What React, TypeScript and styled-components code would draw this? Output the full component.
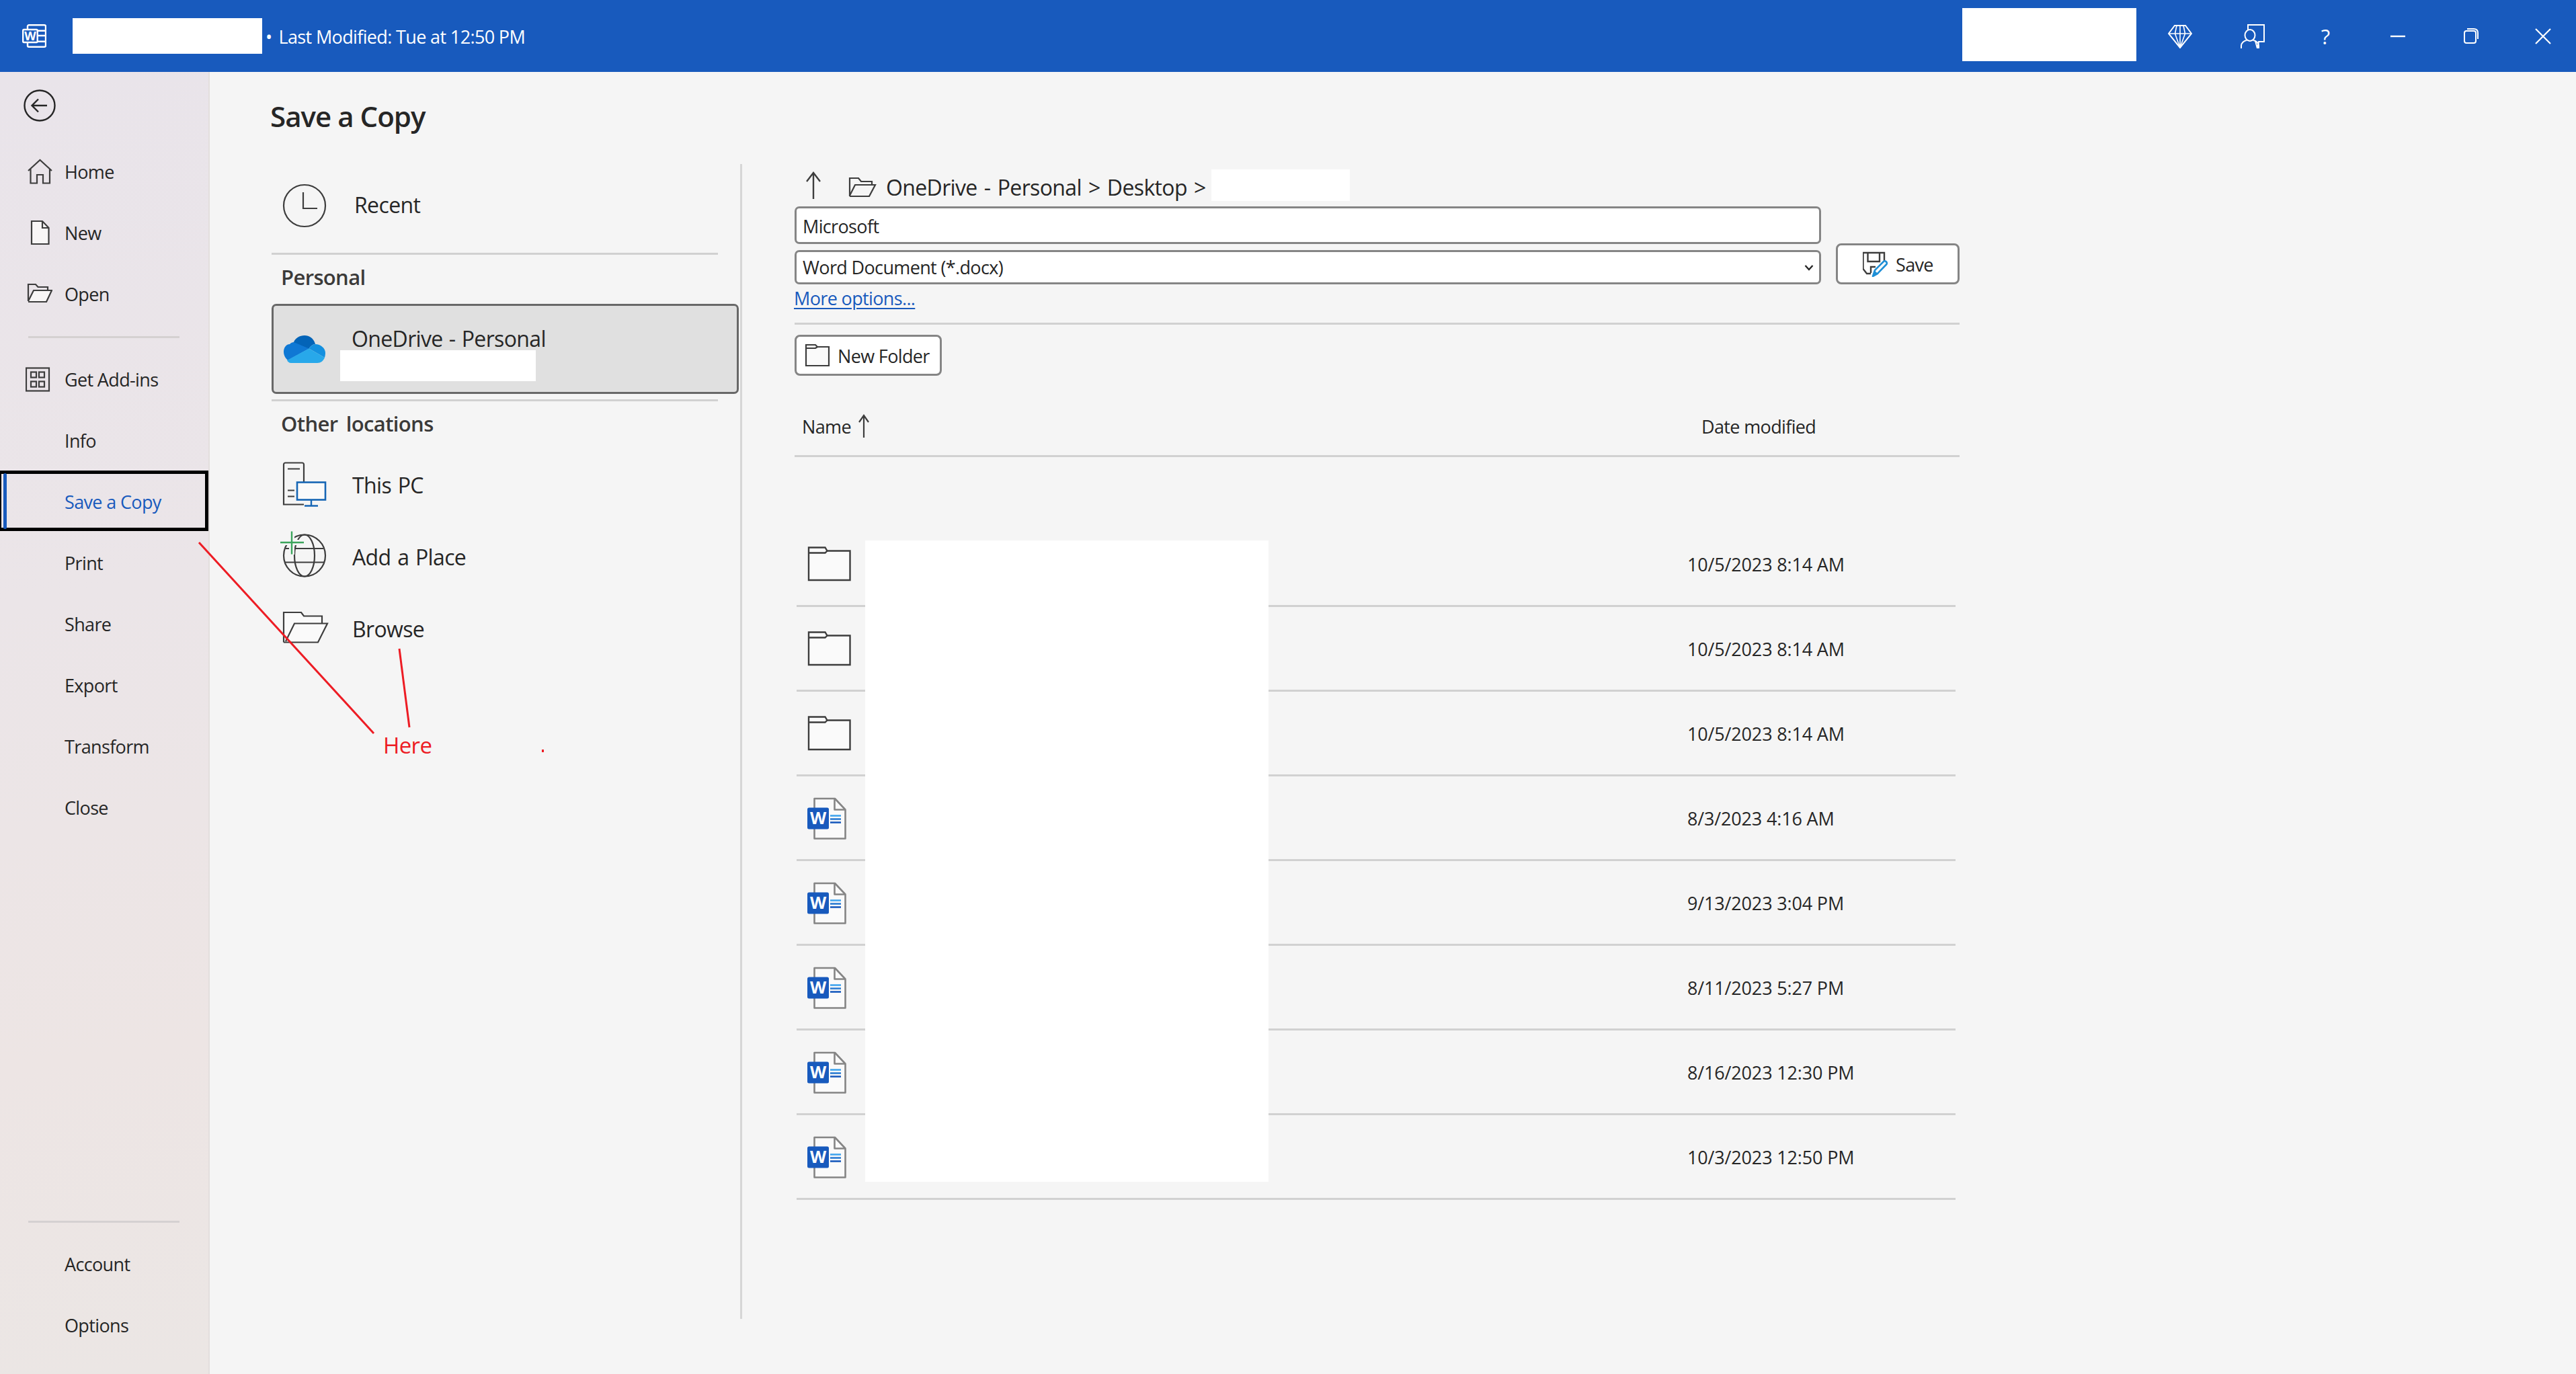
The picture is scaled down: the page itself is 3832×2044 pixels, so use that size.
import React from 'react';
import styled, { createGlobalStyle } from 'styled-components';

const FONT = `"Open Sans", "Noto Sans", "Liberation Sans", sans-serif`;
const INK = '#262626';
const STROKE = '#3d3d3d';
const RULE = '#d1d1d1';
const BLUE = '#185abd';

const Global = createGlobalStyle`
  html, body { margin: 0; padding: 0; background: #f5f5f5; }
  *, *::before, *::after { box-sizing: border-box; }
  body { font-family: ${FONT}; color: ${INK}; letter-spacing: -0.04em; }
`;

const Page = styled.div`
  position: relative;
  width: 3832px;
  height: 2044px;
  overflow: hidden;
  display: flex;
  flex-direction: column;
  background: #f5f5f5;
`;

/* ---------- title bar ---------- */
const TitleBar = styled.header`
  flex: none;
  height: 107px;
  background: ${BLUE};
  display: flex;
  align-items: center;
  padding: 0 31px 0 33px;
  color: #fff;
`;
const TitleLogo = styled.svg`
  width: 36px;
  height: 35px;
  flex: none;
  margin-right: 39px;
`;
const Redaction = styled.div<{ $w: number; $h: number; $up?: number }>`
  flex: none;
  width: ${p => p.$w}px;
  height: ${p => p.$h}px;
  margin-top: ${p => -(p.$up ?? 0)}px;
  background: #fff;
`;
const TitleText = styled.span`
  margin-left: 5px;
  font-size: 27px;
  white-space: pre;
  margin-top: 2px;
  display: flex;
  gap: 10px;
`;
const TitleSpacer = styled.div`
  flex: 1;
`;
const TitleTools = styled.div`
  margin-left: 47px;
  display: flex;
  gap: 72px;
  align-items: center;
`;
const ToolIcon = styled.svg`
  width: 36px;
  height: 36px;
  flex: none;
  display: block;
`;
const HelpMark = styled.span`
  width: 36px;
  text-align: center;
  font-size: 31px;
  font-weight: 400;
  line-height: 36px;
  color: #fff;
`;

/* ---------- body ---------- */
const Body = styled.div`
  flex: 1;
  min-height: 0;
  display: flex;
`;
const Sidebar = styled.nav`
  flex: none;
  width: 312px;
  display: flex;
  flex-direction: column;
  padding-bottom: 25px;
  background: linear-gradient(172deg, #e9e4ea 0%, #ebe5e8 40%, #ede5e4 75%, #ebe6e4 100%);
  border-right: 2px solid #e3dedd;
`;
const BackRow = styled.div`
  height: 105px;
  flex: none;
  padding-left: 35px;
  display: flex;
  align-items: center;
`;
const BackIcon = styled.svg`
  width: 48px;
  height: 48px;
  margin-top: -5px;
`;
const NavRow = styled.div<{ $active?: boolean; $hasIcon?: boolean }>`
  position: relative;
  flex: none;
  height: 91px;
  display: flex;
  align-items: center;
  padding-left: ${p => (p.$hasIcon ? 38 : 96)}px;
  padding-bottom: 4px;
  font-size: 27px;
  color: ${p => (p.$active ? BLUE : INK)};
  ${p =>
    p.$active
      ? `
    &::before {
      content: '';
      position: absolute;
      left: 0; top: -3px; width: 310px; height: 90px;
      border: 5px solid #000;
      border-left-width: 2px;
    }
    &::after {
      content: '';
      position: absolute;
      left: 5px; top: 1px; width: 5px; height: 83px;
      border-radius: 3px;
      background: ${BLUE};
    }
  `
      : ''}
`;
const NavIconSlot = styled.span`
  flex: none;
  width: 40px;
  height: 40px;
  margin-right: 18px;
  display: flex;
  align-items: center;
  justify-content: center;
`;
const NavIcon = styled.svg`
  width: 40px;
  height: 40px;
  display: block;
`;
const NavRule = styled.div<{ $top: number; $bottom: number }>`
  flex: none;
  height: 3px;
  width: 225px;
  margin: ${p => p.$top}px 0 ${p => p.$bottom}px 42px;
  background: #d5d1d1;
`;
const NavSpacer = styled.div`
  flex: 1;
`;

const Main = styled.main`
  flex: 1;
  min-width: 0;
  display: flex;
  flex-direction: column;
  padding-left: 90px;
  padding-bottom: 82px;
  background: #f5f5f5;
`;
const Heading = styled.h1`
  flex: none;
  height: 137px;
  margin: 0;
  padding-top: 36px;
  font-size: 42px;
  line-height: 60px;
  font-weight: 600;
  letter-spacing: -0.023em;
  color: #262626;
`;
const Columns = styled.div`
  flex: 1;
  min-height: 0;
  display: flex;
`;

/* ---------- places column ---------- */
const Places = styled.section`
  flex: none;
  width: 702px;
  padding-left: 2px;
  border-right: 3px solid #d6d6d6;
`;
const PlaceRow = styled.div<{ $h: number; $gap: number }>`
  height: ${p => p.$h}px;
  display: flex;
  align-items: center;
  padding-left: 16px;
  font-size: 32px;
  word-spacing: 2px;
  & > svg {
    flex: none;
    width: 70px;
    height: 70px;
    margin-right: ${p => p.$gap}px;
    display: block;
    overflow: visible;
  }
`;
const RecentLabel = styled.span`
  margin-top: -4px;
`;
const PlacesRule = styled.div`
  height: 3px;
  width: 664px;
  margin-top: 8px;
  background: ${RULE};
`;
const SectionLabel = styled.div<{ $h: number; $pb: number }>`
  height: ${p => p.$h}px;
  padding: 0 0 ${p => p.$pb}px 14px;
  display: flex;
  align-items: center;
  font-size: 31px;
  font-weight: 600;
  word-spacing: 5px;
  color: #3b3a39;
`;
const DriveBox = styled.div`
  height: 134px;
  width: 695px;
  padding-left: 15px;
  background: #e0e0e0;
  border: 3px solid #686868;
  border-radius: 7px;
  display: flex;
  align-items: center;
  position: relative;
`;
const DriveIcon = styled.svg`
  flex: none;
  width: 62px;
  height: 41px;
  margin-right: 39px;
`;
const DriveLabel = styled.div`
  font-size: 32px;
  word-spacing: 1.5px;
  margin-top: -31px;
`;
const DriveRedaction = styled.div`
  position: absolute;
  left: 99px;
  top: 66px;
  width: 291px;
  height: 46px;
  background: #fff;
`;

/* ---------- save form column ---------- */
const SaveArea = styled.section`
  flex: 1;
  min-width: 0;
  padding-left: 78px;
  width: 100%;
`;
const SaveInner = styled.div`
  width: 1733px;
`;
const Crumbs = styled.div`
  height: 63px;
  display: flex;
  align-items: center;
  font-size: 32px;
`;
const UpIcon = styled.svg`
  width: 24px;
  height: 42px;
  margin-left: 16px;
  margin-right: 40px;
  flex: none;
`;
const CrumbFolder = styled.svg`
  width: 42px;
  height: 30px;
  margin-right: 14px;
  margin-top: 4px;
  flex: none;
`;
const CrumbText = styled.span`
  white-space: pre;
  word-spacing: 2.5px;
  margin-right: 8px;
  margin-top: 5px;
`;
const CrumbRedaction = styled.div`
  width: 206px;
  height: 47px;
  background: #fff;
  margin-top: -1px;
`;
const FormRow = styled.div`
  display: flex;
  align-items: flex-end;
  justify-content: space-between;
`;
const FieldStack = styled.div`
  width: 1527px;
  display: flex;
  flex-direction: column;
  gap: 9px;
`;
const Field = styled.div<{ $h: number; $pt: number }>`
  height: ${p => p.$h}px;
  padding: ${p => p.$pt}px 8px 0 9px;
  background: #fff;
  border: 3px solid #858585;
  border-radius: 7px;
  display: flex;
  align-items: center;
  justify-content: space-between;
  font-size: 27px;
`;
const Chevron = styled.svg`
  width: 14px;
  height: 10px;
`;
const OutlineButton = styled.div<{ $w: number; $h: number; $pad: number }>`
  width: ${p => p.$w}px;
  height: ${p => p.$h}px;
  padding: 1px 0 0 ${p => p.$pad}px;
  background: #fff;
  border: 3px solid #858585;
  border-radius: 8px;
  display: flex;
  align-items: center;
  font-size: 27px;
  flex: none;
`;
const ButtonIcon = styled.svg`
  width: 38px;
  height: 38px;
  margin-right: 11px;
  flex: none;
`;
const MoreOptions = styled.a`
  display: block;
  height: 57px;
  margin-left: -1px;
  line-height: 42px;
  font-size: 27px;
  color: ${BLUE};
  text-decoration: underline;
  text-underline-offset: 4px;
`;
const FormRule = styled.div`
  height: 3px;
  background: ${RULE};
  margin-bottom: 15px;
`;
const HeaderRow = styled.div`
  height: 121px;
  padding-top: 50px;
  display: grid;
  grid-template-columns: 1349px 1fr;
  align-items: center;
  padding-bottom: 17px;
  font-size: 27px;
  border-bottom: 3px solid ${RULE};
`;
const HeaderName = styled.div`
  padding-left: 11px;
  display: flex;
  align-items: center;
  gap: 10px;
`;
const SortArrow = styled.svg`
  width: 18px;
  height: 36px;
  margin-top: -2px;
`;
const FileList = styled.div`
  position: relative;
  padding-top: 97px;
`;
const FileRow = styled.div`
  height: 126px;
  margin: 0 6px 0 3px;
  padding-left: 17px;
  display: grid;
  grid-template-columns: 1308px 1fr;
  align-items: center;
  font-size: 27px;
  border-bottom: 3px solid ${RULE};
`;
const FileDate = styled.div`
  padding-top: 1px;
  letter-spacing: -0.006em;
`;
const FileIcon = styled.svg`
  width: 64px;
  height: 64px;
  display: block;
  overflow: visible;
`;
const NamesRedaction = styled.div`
  position: absolute;
  left: 105px;
  top: 124px;
  width: 600px;
  height: 954px;
  background: #fff;
`;

/* ---------- annotations ---------- */
const Annotation = styled.svg`
  position: absolute;
  left: 0;
  top: 0;
  width: 3832px;
  height: 2044px;
  pointer-events: none;
`;
const HereLabel = styled.span`
  position: absolute;
  left: 570px;
  top: 1086px;
  font-size: 33px;
  line-height: 46px;
  color: #ed1c24;
`;

/* ---------- drawings ---------- */
const FolderGlyph = () => (
  <FileIcon viewBox="0 0 64 64" fill="none">
    <path d="M1 16V7.5H25.5l3 5H62.5V56H1z" fill="#fafafa" stroke={STROKE} strokeWidth="2.4" />
    <path d="M1 15.5H25.5l3-3" stroke={STROKE} strokeWidth="2.4" />
  </FileIcon>
);

const WordFileGlyph = () => (
  <FileIcon viewBox="0 0 64 64" fill="none">
    <path d="M9.5 3H40L55.5 19.5V62.5H9.5z" fill="#fafafa" stroke="#858585" strokeWidth="2.6" strokeLinejoin="round" />
    <path d="M39.5 3V19.5H55.5" stroke="#858585" strokeWidth="2.6" strokeLinejoin="round" />
    <rect x="-1" y="16.5" width="32" height="32" rx="2.5" fill={BLUE} />
    <text x="15" y="41" textAnchor="middle" fontFamily="Open Sans, sans-serif" fontWeight="700" fontSize="25" letterSpacing="0" fill="#fff">W</text>
    <path d="M33 28.5H49" stroke="#41a5ee" strokeWidth="2.6" />
    <path d="M33 33.5H49" stroke="#2b7cd3" strokeWidth="2.6" />
    <path d="M33 38.5H49" stroke={BLUE} strokeWidth="2.6" />
  </FileIcon>
);

const files = [
  { kind: 'folder', date: '10/5/2023 8:14 AM' },
  { kind: 'folder', date: '10/5/2023 8:14 AM' },
  { kind: 'folder', date: '10/5/2023 8:14 AM' },
  { kind: 'word', date: '8/3/2023 4:16 AM' },
  { kind: 'word', date: '9/13/2023 3:04 PM' },
  { kind: 'word', date: '8/11/2023 5:27 PM' },
  { kind: 'word', date: '8/16/2023 12:30 PM' },
  { kind: 'word', date: '10/3/2023 12:50 PM' },
];

const navIcon = (name: string) => {
  switch (name) {
    case 'home':
      return (
        <NavIcon viewBox="0 0 40 40" fill="none" stroke={STROKE} strokeWidth="2.2">
          <path d="M4 18 21.5 2 39 18M7.5 15.5V36.5H17V24H26V36.5H36V15.5" />
        </NavIcon>
      );
    case 'new':
      return (
        <NavIcon viewBox="0 0 40 40" fill="none" stroke={STROKE} strokeWidth="2.2">
          <path d="M9 2H25L34.5 12V36H9z" fill="#f8f6f6" />
          <path d="M25 2V12H34.5" />
        </NavIcon>
      );
    case 'open':
      return (
        <NavIcon viewBox="0 0 40 40" fill="none" stroke={STROKE} strokeWidth="2.2">
          <path d="M4 30V5H15L18.5 9H33V14" />
          <path d="M4 31H31L39 14H12L4 30" fill="#f8f6f6" />
        </NavIcon>
      );
    default:
      return (
        <NavIcon viewBox="0 0 40 40" fill="none" stroke={STROKE} strokeWidth="2.2">
          <rect x="1" y="2.5" width="34" height="34" />
          <rect x="8" y="8.5" width="8" height="8" />
          <rect x="20" y="8.5" width="8" height="8" />
          <rect x="8" y="22.5" width="8" height="8" />
          <rect x="20" y="22.5" width="8" height="8" />
        </NavIcon>
      );
  }
};

const Nav = ({ label, icon, active }: { label: string; icon?: string; active?: boolean }) => (
  <NavRow $active={active} $hasIcon={!!icon}>
    {icon ? <NavIconSlot>{navIcon(icon)}</NavIconSlot> : null}
    {label}
  </NavRow>
);

export default function App() {
  return (
    <Page>
      <Global />
      <TitleBar>
        <TitleLogo viewBox="0 0 36 35" fill="none" stroke="#fff" strokeWidth="2.4">
          <rect x="8" y="1.2" width="27" height="32.6" rx="2" />
          <path d="M22 9.7H35M22 17H35M22 25.7H35" />
          <rect x="1.2" y="8" width="21.5" height="19" rx="1.5" fill={BLUE} />
          <text x="12" y="24" textAnchor="middle" fontFamily="Open Sans, sans-serif" fontWeight="700" fontSize="18" letterSpacing="0" fill="#fff" stroke="none">W</text>
        </TitleLogo>
        <Redaction $w={282} $h={53} />
        <TitleText><span>•</span><span>Last Modified: Tue at 12:50 PM</span></TitleText>
        <TitleSpacer />
        <Redaction $w={259} $h={79} $up={4} />
        <TitleTools>
          <ToolIcon viewBox="0 0 36 36" fill="none" stroke="#fff" strokeWidth="2">
            <path d="M10 2H26L35 14 18 35 1 14z" />
            <path d="M1 14H35M13 2 10.5 14 18 35l7.5-21L23 2M18 2V35" strokeWidth="1.6" />
          </ToolIcon>
          <ToolIcon viewBox="0 0 36 36" fill="none" stroke="#fff" strokeWidth="2">
            <path d="M11 8V1H35V26H27L25 36 22 25" />
            <ellipse cx="14" cy="16.5" rx="7.5" ry="8.5" />
            <path d="M1 36V32C1 28 5 24.5 9 24M27 36V32C27 28 23 24.5 19 24" />
          </ToolIcon>
          <HelpMark>?</HelpMark>
          <ToolIcon viewBox="0 0 36 36" fill="none" stroke="#fff" strokeWidth="2.4">
            <path d="M7 18H29" />
          </ToolIcon>
          <ToolIcon viewBox="0 0 36 36" fill="none" stroke="#fff" strokeWidth="2">
            <rect x="9" y="10" width="17" height="18" rx="3" />
            <path d="M13 7H23C27 7 29 9 29 13V22" />
          </ToolIcon>
          <ToolIcon viewBox="0 0 36 36" fill="none" stroke="#fff" strokeWidth="2.2">
            <path d="M7 7 29 29M29 7 7 29" />
          </ToolIcon>
        </TitleTools>
      </TitleBar>

      <Body>
        <Sidebar>
          <BackRow>
            <BackIcon viewBox="0 0 48 48" fill="none" stroke="#262626" strokeWidth="2.4">
              <circle cx="24" cy="24" r="22.5" />
              <path d="M35 24H13M22 14.5 12.5 24 22 33.5" />
            </BackIcon>
          </BackRow>
          <Nav label="Home" icon="home" />
          <Nav label="New" icon="new" />
          <Nav label="Open" icon="open" />
          <NavRule $top={15} $bottom={18} />
          <Nav label="Get Add-ins" icon="addins" />
          <Nav label="Info" />
          <Nav label="Save a Copy" active />
          <Nav label="Print" />
          <Nav label="Share" />
          <Nav label="Export" />
          <Nav label="Transform" />
          <Nav label="Close" />
          <NavSpacer />
          <NavRule $top={0} $bottom={18} />
          <Nav label="Account" />
          <Nav label="Options" />
        </Sidebar>

        <Main>
          <Heading>Save a Copy</Heading>
          <Columns>
            <Places>
              <PlaceRow $h={124} $gap={37}>
                <svg viewBox="0 0 70 70" fill="none" stroke={STROKE} strokeWidth="2.2">
                  <circle cx="33" cy="35" r="31" />
                  <path d="M31 15V39H52" />
                </svg>
                <RecentLabel>Recent</RecentLabel>
              </PlaceRow>
              <PlacesRule />
              <SectionLabel $h={73} $pb={7}>Personal</SectionLabel>
              <DriveBox>
                <DriveIcon viewBox="0 0 62 41">
                  <path d="M38 19.5 24 11C19 9 12 9 9 13 3 13 0 19 0 24 0 30 3 34 6 37z" fill="#0f78d4" />
                  <path d="M15 10C17 4 24 0 31 0 39 0 45 5 47 13 43 13 40 16 37.5 19.5z" fill="#0364b8" />
                  <path d="M47 13C55 13 62 19 62 26 62 28 61.5 31 61 33L37.5 19.5C40 16 43 13 47 13z" fill="#1490df" />
                  <path d="M37.5 19.5 61 33C59 38 55 41 50 41H11C8 41 6 39 5 37z" fill="#28a8ea" />
                </DriveIcon>
                <DriveLabel>OneDrive - Personal</DriveLabel>
                <DriveRedaction />
              </DriveBox>
              <PlacesRule />
              <SectionLabel $h={71} $pb={6}>Other locations</SectionLabel>
              <PlaceRow $h={107} $gap={34}>
                <svg viewBox="0 0 70 70" fill="none" stroke={STROKE} strokeWidth="2.2">
                  <path d="M32 30V4C32 2.5 31 1.5 29.500 1.500H4.500C3 1.500 2 2.500 2 4V63.500H32" />
                  <path d="M8 10.500H26M8 42.500H18M8 51.500H18" />
                  <rect x="22" y="30.500" width="42" height="26" fill="#fafafa" stroke="#1666b5" strokeWidth="2.6" />
                  <path d="M43 57V65.500M33 65.500H53" stroke="#1666b5" strokeWidth="2.4" />
                </svg>
                This PC
              </PlaceRow>
              <PlaceRow $h={107} $gap={34}>
                <svg viewBox="0 0 70 70" fill="none" stroke={STROKE} strokeWidth="2.2">
                  <circle cx="33" cy="32.500" r="31" />
                  <ellipse cx="33" cy="32.500" rx="15" ry="31" />
                  <path d="M5 22H61M3 42.500H63" />
                  <path d="M-3 13H32M14 -4V31" stroke="#f5f5f5" strokeWidth="8" />
                  <path d="M-3 13H32M14 -3.500V30.500" stroke="#3ba55c" strokeWidth="2.4" />
                </svg>
                Add a Place
              </PlaceRow>
              <PlaceRow $h={107} $gap={34}>
                <svg viewBox="0 0 70 70" fill="none" stroke={STROKE} strokeWidth="2.2">
                  <path d="M2 54.500V10H28L32 15.500H59V26.500" fill="#fafafa" />
                  <path d="M2 54.500H53L67 26.500H18L5 53" fill="#fafafa" />
                </svg>
                Browse
              </PlaceRow>
            </Places>

            <SaveArea>
              <SaveInner>
                <Crumbs>
                  <UpIcon viewBox="0 0 24 42" fill="none" stroke={STROKE} strokeWidth="2.4">
                    <path d="M12 41V2M2 15 12 2 22 15" />
                  </UpIcon>
                  <CrumbFolder viewBox="0 0 42 30" fill="none" stroke={STROKE} strokeWidth="2.2">
                    <path d="M2 29V2H15L19 7H35V12" />
                    <path d="M2 29H31L40 12H10L2 28" />
                  </CrumbFolder>
                  <CrumbText>OneDrive - Personal &gt; Desktop &gt;</CrumbText>
                  <CrumbRedaction />
                </Crumbs>
                <FormRow>
                  <FieldStack>
                    <Field $h={56} $pt={3}>Microsoft</Field>
                    <Field $h={51} $pt={0}>
                      Word Document (*.docx)
                      <Chevron viewBox="0 0 14 10" fill="none" stroke={INK} strokeWidth="2.4">
                        <path d="M1.5 2 7 8 12.5 2" />
                      </Chevron>
                    </Field>
                  </FieldStack>
                  <OutlineButton $w={184} $h={61} $pad={37}>
                    <ButtonIcon viewBox="0 0 38 38" fill="none">
                      <path d="M32 17V2H.5V26L6 33H12M7.500 2V15H25V2M12 32V23H19" stroke={STROKE} strokeWidth="2.4" />
                      <path d="M15 37 18 28 31 15C33 13 37 16 35.500 19L22 33z" fill="#fafafa" stroke="#1f8fd6" strokeWidth="2.600" strokeLinejoin="round" />
                      <path d="M15 37.500 18 29 22.500 33z" fill="#1f8fd6" />
                    </ButtonIcon>
                    Save
                  </OutlineButton>
                </FormRow>
                <MoreOptions>More options...</MoreOptions>
                <FormRule />
                <OutlineButton $w={219} $h={61} $pad={12}>
                  <ButtonIcon viewBox="0 0 38 38" fill="none">
                    <path d="M2 6V3H16L19 6H36V34H2z" fill="#fafafa" stroke={STROKE} strokeWidth="2.2" />
                    <path d="M2 8H16L19 6" stroke={STROKE} strokeWidth="2.2" />
                  </ButtonIcon>
                  New Folder
                </OutlineButton>
                <HeaderRow>
                  <HeaderName>
                    Name
                    <SortArrow viewBox="0 0 18 36" fill="none" stroke={STROKE} strokeWidth="2.2">
                      <path d="M9 35V2M2 12 9 2 16 12" />
                    </SortArrow>
                  </HeaderName>
                  <div>Date modified</div>
                </HeaderRow>
                <FileList>
                  {files.map((f, i) => (
                    <FileRow key={i}>
                      {f.kind === 'folder' ? <FolderGlyph /> : <WordFileGlyph />}
                      <FileDate>{f.date}</FileDate>
                    </FileRow>
                  ))}
                  <NamesRedaction />
                </FileList>
              </SaveInner>
            </SaveArea>
          </Columns>
        </Main>
      </Body>

      <Annotation viewBox="0 0 3832 2044" fill="none" stroke="#ed1c24" strokeWidth="3">
        <path d="M296 807 556 1091" />
        <path d="M594 965 609 1082" />
        <rect x="806" y="1115" width="3" height="4" fill="#ed1c24" stroke="none" />
      </Annotation>
      <HereLabel>Here</HereLabel>
    </Page>
  );
}
